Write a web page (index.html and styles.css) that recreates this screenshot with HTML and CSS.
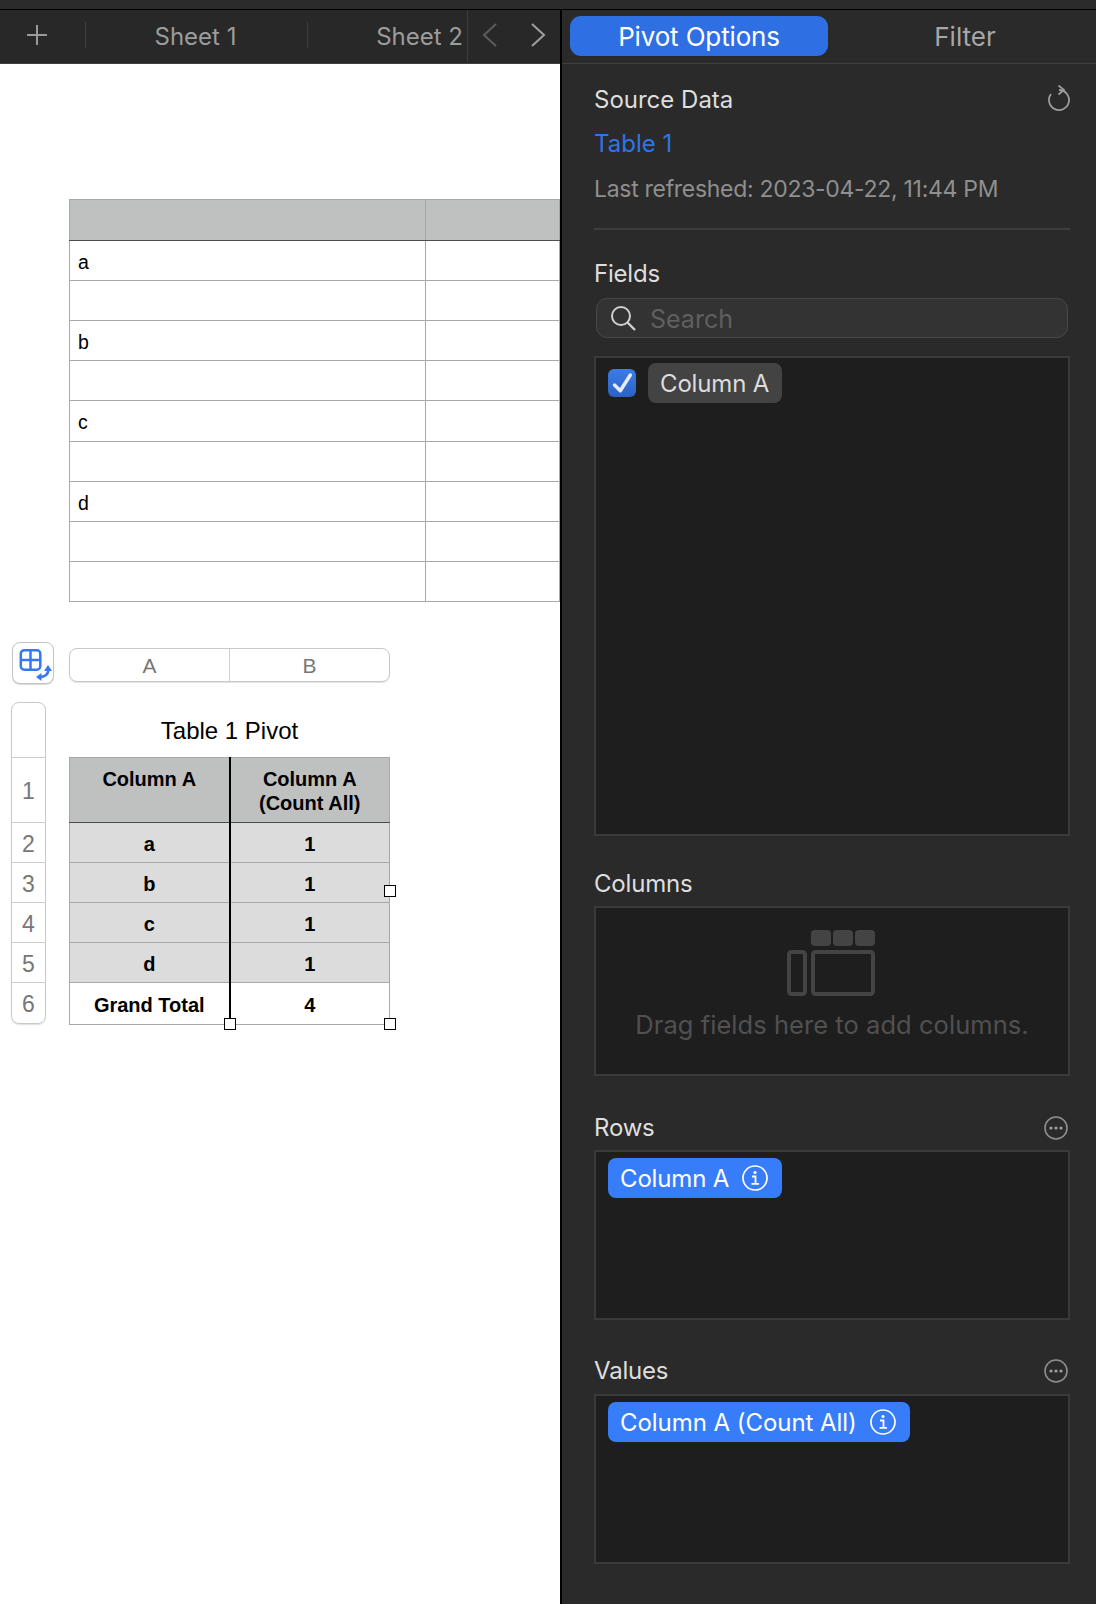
FILE: index.html
```html
<!DOCTYPE html>
<html lang="en">
<head>
<meta charset="utf-8">
<title>Pivot Options</title>
<link rel="stylesheet" href="styles.css">
</head>
<body>
<div class="titlebar"></div>
<div class="app">
  <main class="doc">
    <nav class="sheetbar">
      <button class="add-sheet"><svg width="22" height="22" viewBox="0 0 22 22"><path d="M11 1v20M1 11h20" stroke="#9a9a9a" stroke-width="2" fill="none"/></svg></button>
      <span class="tab-sep"></span>
      <span class="tab tab-one">Sheet 1</span>
      <span class="tab-sep"></span>
      <span class="tab tab-two">Sheet 2</span>
      <span class="tab-end"></span>
      <svg class="chev chev-prev" width="16" height="26" viewBox="0 0 16 26"><path d="M14 2L2 13l12 11" stroke="#5c5c5c" stroke-width="2" fill="none"/></svg>
      <svg class="chev chev-next" width="16" height="26" viewBox="0 0 16 26"><path d="M2 2l12 11L2 24" stroke="#a0a0a0" stroke-width="2" fill="none"/></svg>
    </nav>
    <section class="canvas">
      <table class="plain-table">
        <thead><tr><th></th><th></th></tr></thead>
        <tbody>
          <tr><td>a</td><td></td></tr>
          <tr><td></td><td></td></tr>
          <tr><td>b</td><td></td></tr>
          <tr><td></td><td></td></tr>
          <tr><td>c</td><td></td></tr>
          <tr><td></td><td></td></tr>
          <tr><td>d</td><td></td></tr>
          <tr><td></td><td></td></tr>
          <tr><td></td><td></td></tr>
        </tbody>
      </table>

      <div class="pivot-area">
        <button class="corner">
          <svg width="39" height="39" viewBox="0 0 39 39" fill="none">
            <rect x="6.800" y="7.200" width="19.500" height="19.500" rx="3.500" stroke="#3478f6" stroke-width="2.500"/>
            <path d="M16.500 7.200v19.500M6.800 16.900h19.500" stroke="#3478f6" stroke-width="2.500"/>
            <path d="M26 34c5 0 8-3 8.500-7" stroke="#3478f6" stroke-width="2.600"/>
            <path d="M27.500 30l-5.500 4 5.500 4zM34 22l-4 6h8z" fill="#3478f6"/>
          </svg>
        </button>
        <div class="col-ribbon"><span>A</span><span>B</span></div>
        <div class="row-ribbon">
          <span class="r-title"></span>
          <span class="r-head">1</span>
          <span class="r-cell">2</span>
          <span class="r-cell">3</span>
          <span class="r-cell">4</span>
          <span class="r-cell">5</span>
          <span class="r-cell">6</span>
        </div>
        <div class="pivot-wrap">
          <div class="pivot-title">Table 1 Pivot</div>
          <table class="pivot-table">
            <thead><tr><th>Column A</th><th>Column A<br>(Count All)</th></tr></thead>
            <tbody>
              <tr><td>a</td><td>1</td></tr>
              <tr><td>b</td><td>1</td></tr>
              <tr><td>c</td><td>1</td></tr>
              <tr><td>d</td><td>1</td></tr>
              <tr class="total"><td>Grand Total</td><td>4</td></tr>
            </tbody>
          </table>
          <span class="handle h-right"></span>
          <span class="handle h-bottom"></span>
          <span class="handle h-corner"></span>
        </div>
      </div>
    </section>
  </main>

  <aside class="panel">
    <div class="seg">
      <div class="seg-btn seg-on">Pivot Options</div>
      <div class="seg-btn seg-off">Filter</div>
    </div>
    <div class="panel-body">
      <div class="label-row src-row">
        <span class="label label-wide">Source Data</span>
        <svg class="refresh" width="24" height="28" viewBox="0 0 24 28" fill="none"><path d="M12 5A10 10 0 1 1 4 9" stroke="#9c9c9c" stroke-width="1.800"/><path d="M11.500 .5L17 5l-5.500 4.500" stroke="#9c9c9c" stroke-width="1.800"/></svg>
      </div>
      <a class="link">Table 1</a>
      <div class="refreshed">Last refreshed: 2023-04-22, 11:44 PM</div>
      <hr class="rule">
      <div class="label-row fields-row"><span class="label">Fields</span></div>
      <div class="search">
        <svg width="28" height="28" viewBox="0 0 28 28" fill="none"><circle cx="12" cy="12" r="9" stroke="#d0d0d0" stroke-width="2"/><path d="M18.500 18.500L26 26" stroke="#d0d0d0" stroke-width="2.400"/></svg>
        <span>Search</span>
      </div>
      <div class="well fields-well">
        <div class="field">
          <span class="check"><svg width="28" height="28" viewBox="0 0 28 28" fill="none"><path d="M6.500 16l5.800 5.700L22.300 6" stroke="#e4ecfb" stroke-width="3.500" stroke-linecap="round" stroke-linejoin="round"/></svg></span>
          <span class="chip chip-gray">Column A</span>
        </div>
      </div>

      <div class="label-row cols-row"><span class="label">Columns</span></div>
      <div class="well drop-well empty">
        <svg class="empty-icon" width="88" height="66" viewBox="0 0 88 66" fill="none">
          <rect x="24" y="0" width="20" height="16" rx="4" fill="#444"/>
          <rect x="46" y="0" width="20" height="16" rx="4" fill="#444"/>
          <rect x="68" y="0" width="20" height="16" rx="4" fill="#444"/>
          <rect x="2" y="22" width="16" height="42" rx="2.500" stroke="#444" stroke-width="4"/>
          <rect x="26" y="22" width="60" height="42" rx="2.500" stroke="#444" stroke-width="4"/>
        </svg>
        <span class="empty-text">Drag fields here to add columns.</span>
      </div>

      <div class="label-row rows-row">
        <span class="label">Rows</span>
        <svg class="more" width="24" height="24" viewBox="0 0 24 24" fill="none"><circle cx="12" cy="12" r="11" stroke="#8e8e8e" stroke-width="1.600"/><circle cx="7" cy="12" r="1.600" fill="#a0a0a0"/><circle cx="12" cy="12" r="1.600" fill="#a0a0a0"/><circle cx="17" cy="12" r="1.600" fill="#a0a0a0"/></svg>
      </div>
      <div class="well drop-well">
        <span class="chip chip-blue">Column A
          <svg class="info" width="26" height="26" viewBox="0 0 26 26" fill="none"><circle cx="13" cy="13" r="12" stroke="#fff" stroke-width="1.700"/><circle cx="13" cy="7.500" r="1.600" fill="#fff"/><path d="M10 11.500h3.500v7M9.500 18.800h7.500" stroke="#fff" stroke-width="1.800"/></svg>
        </span>
      </div>

      <div class="label-row vals-row">
        <span class="label">Values</span>
        <svg class="more" width="24" height="24" viewBox="0 0 24 24" fill="none"><circle cx="12" cy="12" r="11" stroke="#8e8e8e" stroke-width="1.600"/><circle cx="7" cy="12" r="1.600" fill="#a0a0a0"/><circle cx="12" cy="12" r="1.600" fill="#a0a0a0"/><circle cx="17" cy="12" r="1.600" fill="#a0a0a0"/></svg>
      </div>
      <div class="well drop-well">
        <span class="chip chip-blue chip-tall">Column A (Count All)
          <svg class="info" width="26" height="26" viewBox="0 0 26 26" fill="none"><circle cx="13" cy="13" r="12" stroke="#fff" stroke-width="1.700"/><circle cx="13" cy="7.500" r="1.600" fill="#fff"/><path d="M10 11.500h3.500v7M9.500 18.800h7.500" stroke="#fff" stroke-width="1.800"/></svg>
        </span>
      </div>
    </div>
  </aside>
</div>
</body>
</html>
```

FILE: styles.css
```css
* { box-sizing: border-box; }
html, body { margin: 0; padding: 0; }
body {
  width: 1096px;
  height: 1604px;
  overflow: hidden;
  background: #fff;
  font-family: "Inter", "Liberation Sans", sans-serif;
}
button { padding: 0; margin: 0; border: 0; background: none; font: inherit; }

.titlebar {
  height: 9.500px;
  background: #2b2b2b;
  border-bottom: 1.500px solid #000;
}
.app {
  display: grid;
  grid-template-columns: 560px 536px;
  height: 1594.500px;
}

/* Left: sheet tabs */
.doc { min-width: 0; overflow: hidden; }
.sheetbar {
  display: flex;
  align-items: center;
  height: 54px;
  background: #282828;
  border-bottom: 1.500px solid #3f3f3f;
}
.add-sheet { display: flex; margin-left: 26px; width: 22px; height: 22px; margin-top: -2px; }
.tab-sep { width: 1px; height: 26px; background: #3d3d3d; margin-top: -2px; }
.add-sheet + .tab-sep { margin-left: 37px; }
.tab {
  color: #9c9c9c;
  font-size: 24px;
  text-align: center;
  margin-top: 1px;
}
.tab-one { width: 219px; margin-right: 2px; }
.tab-two { width: 155px; text-align: right; }
.tab-end { width: 1px; height: 52px; background: #3d3d3d; margin-left: 4px; }
.chev { margin-top: -2px; }
.chev-prev { margin-left: 14px; }
.chev-next { margin-left: 32px; }

/* Left: canvas */
.canvas { height: 1540px; background: #fff; padding: 135px 0 0 69px; overflow: hidden; }
.plain-table {
  border-collapse: collapse;
  table-layout: fixed;
  width: 491px;
  font-family: "Liberation Sans", Arial, sans-serif;
  font-size: 19.500px;
  color: #000;
}
.plain-table th:first-child, .plain-table td:first-child { width: 356px; }
.plain-table th {
  height: 41px;
  background: #bfc1c0;
  border: 1.500px solid #a8a8a8;
  border-bottom: 1.500px solid #4f4f4f;
  padding: 0;
}
.plain-table td {
  height: 40px;
  border: 1.500px solid #a8a8a8;
  padding: 4px 8px 0;
}
.plain-table tr:nth-child(5) td { height: 41px; }

.pivot-area {
  display: grid;
  grid-template-columns: 35px 321px;
  column-gap: 23px;
  margin: 40px 0 0 -58px;
  position: relative;
}
.corner {
  width: 42px;
  height: 42px;
  border: 1px solid #c4c4c4;
  border-radius: 8px;
  box-shadow: 0 1px 1px rgba(0, 0, 0, .15);
  display: flex;
  align-items: center;
  justify-content: center;
  background: #fff;
  margin-left: 1px;
}
.col-ribbon {
  display: grid;
  grid-template-columns: 159px 162px;
  height: 34px;
  margin-top: 6px;
  border: 1px solid #c8c8c8;
  border-radius: 8px;
  box-shadow: 0 1px 1px rgba(0, 0, 0, .12);
  font-family: "Liberation Sans", Arial, sans-serif;
  font-size: 21px;
  color: #777;
}
.col-ribbon span { display: flex; align-items: center; justify-content: center; padding-top: 2px; }
.col-ribbon span + span { border-left: 1px solid #cfcfcf; padding-right: 2px; }
.row-ribbon {
  display: flex;
  flex-direction: column;
  height: 322px;
  margin-top: 18px;
  border: 1px solid #c8c8c8;
  border-radius: 8px;
  box-shadow: 0 1px 1px rgba(0, 0, 0, .12);
  font-family: "Liberation Sans", Arial, sans-serif;
  font-size: 23px;
  color: #777;
}
.row-ribbon span { display: flex; align-items: center; justify-content: center; flex: none; height: 40px; padding-top: 3px; border-bottom: 1px solid #cfcfcf; }
.row-ribbon .r-title { height: 55px; }
.row-ribbon .r-head { height: 65px; }
.row-ribbon .r-cell { padding-top: 5px; }
.row-ribbon .r-cell:last-child { border-bottom: 0; flex: 1; padding-top: 3px; }

.pivot-wrap { position: relative; margin-top: 18px; width: 321px; }
.pivot-title {
  height: 55px;
  padding-top: 15px;
  text-align: center;
  font-family: "Liberation Sans", Arial, sans-serif;
  font-size: 24px;
  line-height: 28px;
  color: #000;
}
.pivot-table {
  border-collapse: collapse;
  table-layout: fixed;
  width: 321px;
  font-family: "Liberation Sans", Arial, sans-serif;
  font-size: 20px;
  font-weight: 700;
  color: #000;
  text-align: center;
}
.pivot-table th {
  height: 65px;
  background: #bfc1c0;
  border: 1.500px solid #a8a8a8;
  border-bottom: 1.500px solid #4a4a4a;
  padding: 9px 0 0;
  vertical-align: top;
  line-height: 24px;
  font-weight: 700;
}
.pivot-table td {
  height: 40px;
  background: #dcdcdc;
  border: 1.500px solid #a8a8a8;
  padding: 4px 0 0;
}
.pivot-table .total td { background: #fff; height: 42px; border-top: 1.500px solid #4a4a4a; }
.pivot-table th:first-child, .pivot-table td:first-child { width: 160px; border-right: 2px solid #000; }
.handle {
  position: absolute;
  width: 12px;
  height: 12px;
  background: #fff;
  border: 1px solid #000;
}
.h-right { right: -6px; top: 183px; }
.h-bottom { left: 155px; bottom: -5px; }
.h-corner { right: -6px; bottom: -5px; }

/* Right panel */
.panel {
  background: #2a2a2a;
  border-left: 2px solid #000;
  color: #dcdcdc;
  font-size: 24px;
}
.seg {
  display: grid;
  grid-template-columns: 258px 1fr;
  height: 54px;
  padding: 6px 0 0 8px;
  border-bottom: 1.500px solid #3f3f3f;
}
.seg-btn {
  height: 40px;
  display: flex;
  align-items: center;
  justify-content: center;
  padding-top: 2px;
  font-size: 26px;
  color: #a6a6a6;
  letter-spacing: -0.150px;
}
.seg-off { padding-left: 6px; letter-spacing: 0; }
.seg-on { background: #2f6fe4; color: #fff; border-radius: 11px; }
.panel-body { padding: 0 26px 0 32px; }
.label-row {
  display: flex;
  justify-content: space-between;
  align-items: center;
  height: 30px;
  margin-bottom: 8px;
}
.label { font-size: 24px; padding-top: 2px; letter-spacing: -0.200px; color: #dedede; }
.label-wide { letter-spacing: 0; }
.src-row { margin-top: 20px; margin-bottom: 0; }
.refresh { margin-right: -1px; }
.link {
  display: block;
  margin-top: 15px;
  height: 30px;
  line-height: 30px;
  color: #2f74e8;
  letter-spacing: 0;
}
.refreshed {
  margin-top: 14px;
  height: 30px;
  padding-top: 1px;
  line-height: 30px;
  font-size: 23px;
  color: #8f8f8f;
  letter-spacing: -0.300px;
  white-space: nowrap;
}
.rule { height: 2px; border: 0; margin: 25px 0 0; background: #3d3d3d; }
.fields-row { margin-top: 28px; margin-bottom: 10px; }
.search {
  display: flex;
  align-items: center;
  gap: 13px;
  height: 40px;
  margin: 0 2px;
  padding-left: 12px;
  background: #333;
  border: 1px solid #484848;
  border-radius: 11px;
  color: #5f5f5f;
  font-size: 25px;
}
.search span { padding-top: 2px; }
.well { background: #1e1e1e; border: 2px solid #3a3a3a; }
.fields-well { height: 480px; margin-top: 18px; padding: 5px 12px; }
.field { display: flex; align-items: center; gap: 12px; }
.check {
  display: flex;
  width: 28px;
  height: 28px;
  border-radius: 6px;
  background: linear-gradient(#3b7ce8, #2c62c4);
}
.chip {
  display: inline-flex;
  align-items: center;
  height: 40px;
  padding: 2px 14px 0 12px;
  border-radius: 8px;
  font-size: 24px;
  letter-spacing: -0.150px;
}
.chip .info { margin-top: -2px; }
.chip-gray { background: #434343; color: #dcdcdc; padding-right: 13px; }
.chip-blue { background: #377cf8; color: #fff; }
.chip-tall { letter-spacing: -0.050px; }
.info { margin-left: 13px; }
.cols-row { margin-top: 32px; margin-bottom: 8px; }
.drop-well { height: 170px; padding: 6px 12px; }
.empty {
  display: flex;
  flex-direction: column;
  align-items: center;
  padding: 22px 0 0;
  gap: 14px;
}
.empty-icon { margin-left: -2px; }
.empty-text { color: #505050; font-size: 25.500px; line-height: 30px; letter-spacing: 0.050px; white-space: nowrap; }
.rows-row { margin-top: 36px; }
.vals-row { margin-top: 35px; margin-bottom: 9px; }
.more { margin: 2px 2px 0 0; }
```
